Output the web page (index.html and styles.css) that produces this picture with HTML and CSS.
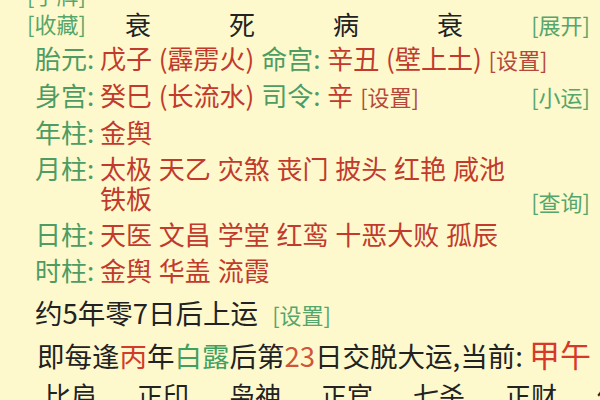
FILE: index.html
```html
<!DOCTYPE html>
<html lang="zh-CN">
<head>
<meta charset="utf-8">
<title>八字排盘</title>
<link rel="stylesheet" href="styles.css">
</head>
<body>
<div class="sheet">
  <div class="row row-top"><span class="btn">[手牌]</span></div>

  <div class="row row-head">
    <span class="btn head-btn">[收藏]</span>
    <span class="stage">衰</span>
    <span class="stage">死</span>
    <span class="stage">病</span>
    <span class="stage">衰</span>
  </div>
  <div class="side side-head"><span class="btn">[展开]</span></div>

  <div class="row data r3 wide">
    <span class="label">胎元:</span>
    <span class="value">戊子 (霹雳火) <span class="sub">命宫:</span> 辛丑 (壁上土) <span class="set">[设置]</span></span>
  </div>

  <div class="row data r4">
    <span class="label">身宫:</span>
    <span class="value">癸巳 (长流水) <span class="sub">司令:</span> 辛 <span class="set">[设置]</span></span>
  </div>
  <div class="side side-xy"><span class="btn">[小运]</span></div>

  <div class="row data r5">
    <span class="label">年柱:</span>
    <span class="value">金舆</span>
  </div>
  <div class="side side-query"><span class="btn">[查询]</span></div>

  <div class="row data r6">
    <span class="label">月柱:</span>
    <span class="value">太极 天乙 灾煞 丧门 披头 红艳 咸池 铁板</span>
  </div>

  <div class="row data r7">
    <span class="label">日柱:</span>
    <span class="value">天医 文昌 学堂 红鸾 十恶大败 孤辰</span>
  </div>

  <div class="row data r8">
    <span class="label">时柱:</span>
    <span class="value">金舆 华盖 流霞</span>
  </div>

  <div class="line line-start">约5年零7日后上运 <span class="btn">[设置]</span></div>

  <div class="line line-luck">即每逢<span class="red">丙</span>年<span class="green">白露</span>后第<span class="num">23</span>日交脱大运,当前: <span class="current">甲午</span></div>

  <div class="gods">
    <span class="god">比肩</span>
    <span class="god">正印</span>
    <span class="god">枭神</span>
    <span class="god">正官</span>
    <span class="god">七杀</span>
    <span class="god">正财</span>
    <span class="god">伤官</span>
  </div>
</div>
</body>
</html>
```

FILE: styles.css
```css
html, body {
  margin: 0;
  padding: 0;
  width: 600px;
  height: 400px;
  overflow: hidden;
  background: #fdf9cd;
}

body {
  font-family: "Noto Sans CJK SC", "Noto Sans", sans-serif;
  font-size: 26px;
  color: #222;
}

.sheet {
  display: grid;
  grid-template-columns: 1fr auto;
  margin-top: -20px;
  padding: 0 10px 0 27px;
}

.row {
  grid-column: 1;
  display: flex;
  align-items: center;
  white-space: nowrap;
}

.row.wide {
  grid-column: 1 / 3;
}

.btn {
  font-size: 22px;
  color: #55a66c;
}

.row-top {
  grid-row: 1;
  height: 28px;
}

.row-head {
  grid-row: 2;
  height: 30px;
}

.head-btn {
  width: 59px;
}

.stage {
  width: 104px;
  text-align: center;
  color: #222;
}

.side {
  grid-column: 2;
  display: flex;
  align-items: center;
  justify-content: flex-end;
}

.side-head { grid-row: 2; }
.side-xy { grid-row: 4; }
.side-query { grid-row: 5 / 9; }

.data {
  align-items: flex-start;
  padding: 3px 0 3px 8px;
  line-height: 30px;
}

.r3 { grid-row: 3; }
.r4 { grid-row: 4; }
.r5 { grid-row: 5; }
.r6 { grid-row: 6; }
.r7 { grid-row: 7; }
.r8 { grid-row: 8; }

.label {
  flex: none;
  width: 65px;
  color: #4e9c63;
}

.value {
  color: #c23a2c;
  white-space: normal;
  word-spacing: 1px;
}

.sub {
  color: #4e9c63;
}

.set {
  font-size: 22px;
  color: #b5483a;
}

.line {
  grid-column: 1 / 3;
  padding-left: 8px;
  font-size: 27.5px;
  line-height: 40px;
  white-space: nowrap;
}

.line-start {
  grid-row: 9;
  padding-top: 4px;
}

.line-start .btn {
  margin-left: 8px;
}

.line-luck {
  grid-row: 10;
  padding-left: 10px;
}

.red { color: #d23a2c; }
.green { color: #3fa060; }
.num { color: #d0543a; }

.current {
  font-size: 31px;
  color: #d8382a;
}

.gods {
  grid-column: 1 / 3;
  grid-row: 11;
  display: flex;
  margin-left: -2px;
  line-height: 40px;
  white-space: nowrap;
}

.god {
  flex: none;
  width: 92px;
  text-align: center;
}
```
